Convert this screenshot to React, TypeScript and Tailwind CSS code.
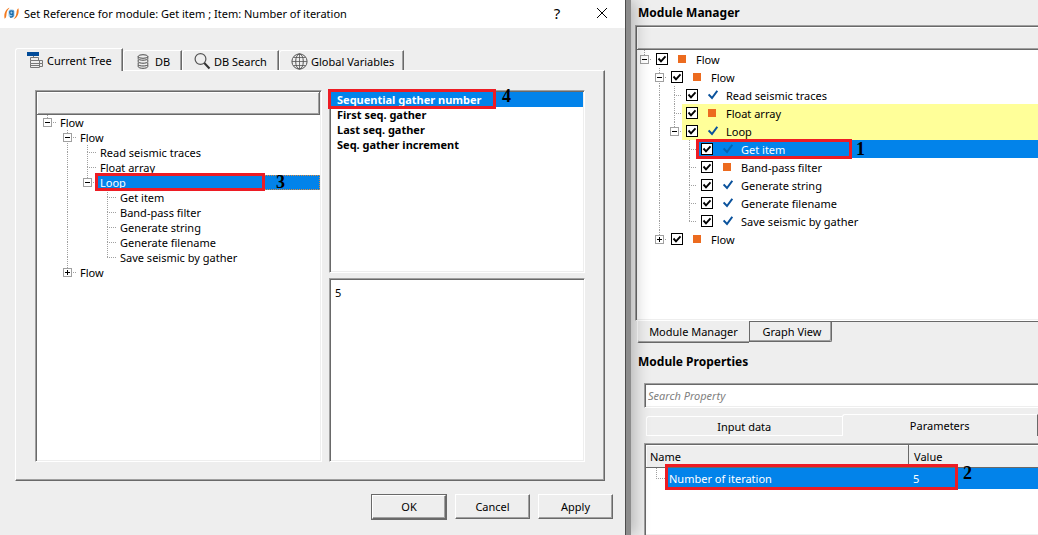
import React, { useState } from "react";
import clsx from "clsx";

const sunken =
  "border border-t-[#a0a0a0] border-l-[#a0a0a0] border-r-white border-b-white p-px shadow-[inset_1px_1px_0_#696969,inset_-1px_-1px_0_#eeeeee]";
const sunkenOpenRight =
  "border border-r-0 border-t-[#a0a0a0] border-l-[#a0a0a0] border-b-white p-px pr-0 shadow-[inset_1px_1px_0_#696969,inset_0_-1px_0_#eeeeee]";
const raised =
  "border border-t-white border-l-white border-r-[#696969] border-b-[#696969] shadow-[inset_-1px_-1px_0_#a0a0a0]";

type Cell = "blank" | "line" | "tee" | "end" | "minus" | "minusEnd" | "minusTop" | "plusEnd";

type Status = "ok" | "square";

interface Row {
  label: string;
  cells: Cell[];
  status: Status;
}

const rows: Row[] = [
  { label: "Flow", cells: ["minusTop"], status: "square" },
  { label: "Flow", cells: ["blank", "minus"], status: "square" },
  { label: "Read seismic traces", cells: ["blank", "line", "tee"], status: "ok" },
  { label: "Float array", cells: ["blank", "line", "tee"], status: "square" },
  { label: "Loop", cells: ["blank", "line", "minusEnd"], status: "ok" },
  { label: "Get item", cells: ["blank", "line", "blank", "tee"], status: "ok" },
  { label: "Band-pass filter", cells: ["blank", "line", "blank", "tee"], status: "square" },
  { label: "Generate string", cells: ["blank", "line", "blank", "tee"], status: "ok" },
  { label: "Generate filename", cells: ["blank", "line", "blank", "tee"], status: "ok" },
  { label: "Save seismic by gather", cells: ["blank", "line", "blank", "end"], status: "ok" },
  { label: "Flow", cells: ["blank", "plusEnd"], status: "square" },
];

function Branch({ kind, w, h, cx }: { kind: Cell; w: number; h: number; cx: number }) {
  const cy = Math.floor(h / 2);
  const box = kind.startsWith("minus") || kind.startsWith("plus");
  const above = kind !== "blank";
  const below = kind === "line" || kind === "tee" || kind === "minus";
  const across = kind !== "blank" && kind !== "line";
  const drawing = (
    <svg width={w} height={h} viewBox={`0 0 ${w} ${h}`} shapeRendering="crispEdges" className="block" aria-hidden="true">
      <g stroke="#a0a0a0" strokeWidth="1" strokeDasharray="1 1">
        {above && <path d={`M${cx + 0.5} 0V${cy}`} />}
        {below && <path d={`M${cx + 0.5} ${cy}V${h}`} />}
        {across && <path d={`M${cx} ${cy + 0.5}H${w}`} />}
      </g>
      {box && (
        <>
          <rect x={cx - 3.5} y={cy - 3.5} width="8" height="8" fill="#fff" stroke="#a0a0a0" />
          <path d={`M${cx - 2} ${cy + 0.5}h5`} stroke="#000" />
          {kind === "plusEnd" && <path d={`M${cx + 0.5} ${cy - 2}v5`} stroke="#000" />}
        </>
      )}
    </svg>
  );
  return box ? (
    <button type="button" aria-label="Toggle branch" className="shrink-0">
      {drawing}
    </button>
  ) : (
    <span className="shrink-0">{drawing}</span>
  );
}

function Callout({ n, className }: { n: number; className: string }) {
  return (
    <span className={clsx("absolute z-10 font-['Liberation_Serif',serif] text-[18px] leading-[18px] font-bold text-black", className)}>
      {n}
    </span>
  );
}

function Outline({ className }: { className: string }) {
  return <span className={clsx("pointer-events-none absolute z-10 border-[3px] border-[#ed1c24]", className)} />;
}

function AppLogo() {
  return (
    <svg width="15" height="13" viewBox="0 0 15 13" aria-hidden="true">
      <path d="M5.500 .8C2.500 1.500 -.6 6 .6 11.800C2 11 2.300 9.500 2.400 8C2.600 5 3.500 3 5.500 .8Z" fill="#f47b20" />
      <path d="M9.500 12.200C12.500 11.500 15.600 7 14.400 1.200C13 2 12.700 3.500 12.600 5C12.400 8 11.500 10 9.500 12.200Z" fill="#f47b20" />
      <rect x="4.500" y="2.500" width="6" height="8" rx="2" fill="#9dccec" />
      <path d="M9 3.500V8.500Q9 10 7.500 10H6M9 5Q8.500 3.800 7.300 3.800Q5.800 3.800 5.800 5.600Q5.800 7.500 7.300 7.500Q8.500 7.500 9 6.300" fill="none" stroke="#1c6aa8" strokeWidth="1.300" />
    </svg>
  );
}

function TreeIcon() {
  return (
    <svg width="17" height="17" viewBox="0 0 17 17" aria-hidden="true">
      <path d="M0 0H12V4H0Z" fill="#004a98" />
      <path
        d="M6.500 4V5.500M3.500 5.500H11.500V8.500M3.500 5.500V8.500H15.500V11.500H3.500V8.500M3.500 11.500V15.500H12.500V11.500M15.500 11.500V14.500H12.500M3.500 13.500H12.500M12.500 8.500V11.500"
        fill="none"
        stroke="#777"
      />
    </svg>
  );
}

function DbIcon() {
  return (
    <svg width="12" height="15" viewBox="0 0 12 15" fill="none" stroke="#4a4a4a" aria-hidden="true">
      <ellipse cx="6" cy="2.500" rx="4.800" ry="1.800" />
      <path d="M1.200 2.500V4.500C1.200 6.800 10.800 6.800 10.800 4.500V2.500M1.200 5.500V7.500C1.200 9.800 10.800 9.800 10.800 7.500V5.500M1.200 8.500V10.500C1.200 12.500 10.800 12.500 10.800 10.500V8.500M1.200 11V12.500C1.200 14.900 10.800 14.900 10.800 12.500V11" />
    </svg>
  );
}

function SearchIcon() {
  return (
    <svg width="17" height="17" viewBox="0 0 17 17" fill="none" aria-hidden="true">
      <circle cx="6.500" cy="6" r="5.400" stroke="#555" strokeWidth="1.200" />
      <path d="M10.300 10L15.500 15.500" stroke="#333" strokeWidth="2" />
    </svg>
  );
}

function GlobeIcon() {
  return (
    <svg width="17" height="17" viewBox="0 0 17 17" fill="none" stroke="#555" aria-hidden="true">
      <circle cx="8.500" cy="8.500" r="7.600" />
      <ellipse cx="8.500" cy="8.500" rx="3.800" ry="7.600" />
      <path d="M8.500 1V16M1 8.500H16M2.500 4.500H14.500M2.500 12.500H14.500" strokeWidth=".8" />
    </svg>
  );
}

function StatusIcon({ status, dim }: { status: Status; dim: boolean }) {
  return status === "ok" ? (
    <svg width="10" height="10" viewBox="0 0 10 10" fill="none" aria-hidden="true">
      <path d="M.6 4.500L4 8L9.300 .8" stroke={dim ? "#0563b5" : "#0a529c"} strokeWidth="2" />
    </svg>
  ) : (
    <span className="block h-2 w-2 bg-[#ec6b1f]" />
  );
}

function DialogTree() {
  return (
    <div className={clsx("flex min-w-0 flex-col bg-white", sunken)}>
      <div className="h-[23px] shrink-0 border-r border-b border-[#696969] bg-[#eee] shadow-[inset_1px_1px_0_#fff,inset_-1px_-1px_0_#a0a0a0]" />
      <div>
        {rows.map((r, i) => {
          const selected = r.label === "Loop";
          return (
            <div key={i} className="relative flex h-[15px]">
              {r.cells.map((c, j) => (
                <Branch key={j} kind={c} w={20} h={15} cx={10} />
              ))}
              <span
                className={clsx(
                  "flex-1 pl-[3px] leading-[15px] whitespace-nowrap",
                  selected && "bg-[#0283ea] text-white outline-1 -outline-offset-1 outline-dotted outline-[#e08a3c]",
                )}
              >
                {r.label}
              </span>
              {selected && (
                <>
                  <Outline className="-top-[2px] right-[55px] -bottom-[1px] left-[58px]" />
                  <Callout n={3} className="-top-[2px] right-[35px]" />
                </>
              )}
            </div>
          );
        })}
      </div>
    </div>
  );
}

const gatherFields = ["Sequential gather number", "First seq. gather", "Last seq. gather", "Seq. gather increment"];

function DialogTab({ label, icon, active, className }: { label: string; icon: React.ReactNode; active?: boolean; className: string }) {
  return (
    <button
      type="button"
      role="tab"
      aria-selected={!!active}
      className={clsx(
        "flex items-center whitespace-nowrap rounded-tl-[3px] border-t border-l border-white border-r border-r-[#696969] pt-px shadow-[inset_-1px_0_0_#a0a0a0]",
        active ? "relative -mb-px h-[23px] bg-[#eee]" : "h-5",
        className,
      )}
    >
      {icon}
      {label}
    </button>
  );
}

function ReferenceDialog() {
  return (
    <section className="relative z-20 flex flex-col border-r border-[#4d4d4d] bg-[#eee] shadow-[5px_0_0_#8c8c8c,10px_0_14px_rgba(0,0,0,0.22)]">
      <header className="flex h-7 shrink-0 items-center bg-white pr-[17px] pb-[2px] pl-1">
        <AppLogo />
        <h1 className="flex-1 pl-[5px] whitespace-nowrap">Set Reference for module: Get item ; Item: Number of iteration</h1>
        <button type="button" aria-label="Help" className="w-[10px] text-[15px] leading-5">?</button>
        <button type="button" aria-label="Close" className="ml-[34px]">
          <svg width="12" height="12" viewBox="0 0 12 12" stroke="#000" fill="none">
            <path d="M1 1L11 11M11 1L1 11" />
          </svg>
        </button>
      </header>
      <div className="flex flex-1 flex-col pt-5 pr-[20px] pl-[15px]">
        <div role="tablist" className="flex items-end">
          <DialogTab label="Current Tree" icon={<TreeIcon />} active className="w-[108px] gap-[3px] pl-[11px]" />
          <DialogTab label="DB" icon={<DbIcon />} className="w-[59px] gap-[6px] pl-[13px]" />
          <DialogTab label="DB Search" icon={<SearchIcon />} className="w-[97px] gap-[3px] pl-[11px]" />
          <DialogTab label="Global Variables" icon={<GlobeIcon />} className="w-[125px] gap-[3px] pl-[11px]" />
        </div>
        <div
          className={clsx(
            "grid flex-1 grid-cols-[287fr_256fr] gap-[7px] pt-[19px] pr-[19px] pb-[18px] pl-[19px]",
            raised,
          )}
        >
          <DialogTree />
          <div className="grid min-w-0 grid-rows-[183fr_184fr] gap-[5px]">
            <div className={clsx("relative bg-white", sunken)}>
              <ul role="listbox" aria-label="Values">
                {gatherFields.map((f, i) => (
                  <li
                    key={f}
                    role="option"
                    aria-selected={i === 0}
                    className={clsx("pl-[6px] leading-[15px] font-bold whitespace-nowrap", i === 0 && "h-[15px] bg-[#0283ea] text-white")}
                  >
                    {f}
                  </li>
                ))}
              </ul>
              <Outline className="-top-[2px] -left-[2px] h-5 w-[168px]" />
              <Callout n={4} className="-top-[4px] left-[172px]" />
            </div>
            <textarea
              aria-label="Value"
              defaultValue="5"
              className={clsx("block min-h-0 w-full resize-none bg-white outline-none", sunken, "pt-[6px] pl-[5px] leading-[15px]")}
            />
          </div>
        </div>
      </div>
      <footer className="flex h-[54px] shrink-0 items-center justify-end gap-2 pr-[12px] pb-[3px]">
        <button type="button" className="h-[26px] w-[76px] border border-[#696969] p-0">
          <span className={clsx("flex h-full items-center justify-center", raised)}>OK</span>
        </button>
        <button type="button" className={clsx("h-[25px] w-[75px]", raised)}>Cancel</button>
        <button type="button" className={clsx("h-[25px] w-[75px]", raised)}>Apply</button>
      </footer>
    </section>
  );
}

function ModuleTree() {
  const [checked, setChecked] = useState<boolean[]>(rows.map(() => true));
  return (
    <div className={clsx("ml-[4px] flex h-[296px] shrink-0 flex-col bg-white", sunkenOpenRight)}>
      <div className="h-[23px] shrink-0 border-b border-[#696969] bg-[#eee] shadow-[inset_1px_1px_0_#fff,inset_0_-1px_0_#a0a0a0]" />
      <div>
        {rows.map((r, i) => {
          const selected = r.label === "Get item";
          const marked = r.label === "Float array" || r.label === "Loop";
          return (
            <div key={i} className="relative flex h-[18px]">
              {r.cells.map((c, j) => (
                <Branch key={j} kind={c} w={15} h={18} cx={7} />
              ))}
              <label
                className={clsx(
                  "flex flex-1 items-center pl-1 whitespace-nowrap",
                  selected && "bg-[#0283ea] text-white",
                  marked && "bg-[#ffff99]",
                )}
              >
                <span className="relative h-3 w-3">
                  <input
                    type="checkbox"
                    checked={checked[i]}
                    onChange={() => setChecked(checked.map((v, k) => (k === i ? !v : v)))}
                    className="peer block h-3 w-3 appearance-none border border-black bg-white"
                  />
                  <svg width="12" height="12" viewBox="0 0 12 12" fill="none" className="pointer-events-none absolute top-0 left-0 hidden peer-checked:block">
                    <path d="M2.500 5.500L5 8.300L9.500 3.300" stroke="#000" strokeWidth="1.900" />
                  </svg>
                </span>
                <span className="flex w-7 pl-[10px]">
                  <StatusIcon status={r.status} dim={selected} />
                </span>
                {r.label}
              </label>
              {selected && (
                <>
                  <Outline className="-top-px -bottom-px left-[59px] w-[156px]" />
                  <Callout n={1} className="top-0 left-[219px]" />
                </>
              )}
            </div>
          );
        })}
      </div>
    </div>
  );
}

function ModulePanel() {
  return (
    <section className="flex min-w-0 flex-col overflow-hidden bg-[#eee] pl-[5px]">
      <h2 className="h-[25px] shrink-0 pl-[7px] text-[12px] leading-[25px] font-bold">Module Manager</h2>
      <ModuleTree />
      <div role="tablist" className="flex pl-[6px]">
        <button type="button" role="tab" aria-selected="true" className="h-[22px] w-[112px] rounded-bl-[2px] border-b border-l border-l-white border-b-[#696969] shadow-[inset_0_-1px_0_#a0a0a0]">
          Module Manager
        </button>
        <div className="flex flex-1 items-start border-t border-[#696969]">
          <button type="button" role="tab" aria-selected="false" className="h-5 w-[83px] rounded-br-[2px] border-r border-b border-l border-[#696969] pl-[3px] shadow-[inset_-1px_-1px_0_#a0a0a0]">
            Graph View
          </button>
        </div>
      </div>
      <h2 className="h-10 shrink-0 pl-[7px] text-[12px] leading-[38px] font-bold">Module Properties</h2>
      <input
        type="text"
        aria-label="Search Property"
        placeholder="Search Property"
        className={clsx("ml-[13px] h-[25px] shrink-0 bg-white outline-none placeholder:text-[#808080] placeholder:italic", sunkenOpenRight, "pl-[3px]")}
      />
      <div role="tablist" className="mt-[6px] ml-[15px] flex h-[29px] shrink-0 items-start">
        <button type="button" role="tab" aria-selected="false" className="mt-[2px] h-5 flex-1 rounded-tl-[3px] border border-r-0 border-white">
          Input data
        </button>
        <button type="button" role="tab" aria-selected="true" className="h-[22px] flex-1 rounded-tl-[3px] border-t border-r border-l border-white border-r-[#696969]">
          Parameters
        </button>
      </div>
      <div className={clsx("relative ml-[13px] flex-1 border-b-0 bg-white", sunkenOpenRight)}>
        <table className="w-full table-fixed border-separate border-spacing-0 text-left">
          <thead>
            <tr className="h-[23px] bg-[#eee] shadow-[inset_1px_1px_0_#fff,inset_0_-1px_0_#a0a0a0]">
              <th className="w-[263px] border-r border-b border-[#696969] p-0 pl-1 font-normal">Name</th>
              <th className="border-b border-[#696969] p-0 pl-[5px] font-normal">Value</th>
            </tr>
          </thead>
          <tbody>
            <tr className="h-[21px] text-white">
              <td className="p-0">
                <span className="flex h-[21px]">
                  <Branch kind="end" w={21} h={21} cx={10} />
                  <span className="flex-1 bg-[#0283ea] pl-[2px] leading-[21px]">Number of iteration</span>
                </span>
              </td>
              <td className="bg-[#0283ea] p-0 pl-1">5</td>
            </tr>
          </tbody>
        </table>
        <Outline className="top-[20px] left-5 h-[26px] w-[293px]" />
        <Callout n={2} className="top-[20px] left-[318px]" />
      </div>
    </section>
  );
}

export default function App() {
  return (
    <main className="grid min-h-screen grid-cols-[626fr_412fr] overflow-hidden bg-[#eee] font-['Noto_Sans',sans-serif] text-[11px] leading-[15px] text-black">
      <ReferenceDialog />
      <ModulePanel />
    </main>
  );
}
